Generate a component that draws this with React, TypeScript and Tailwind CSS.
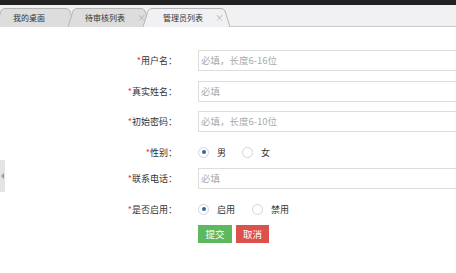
import React from "react";

const font = { fontFamily: '"Noto Sans CJK SC", "Liberation Sans", sans-serif' };

function Tab({ label, width, active, close, pl }: { label: string; width: number; active?: boolean; close?: boolean; pl: string }) {
  const h = 19;
  const s = 7;
  const d = `M0,${h} L${s - 2},3 Q${s - 1},0.5 ${s + 2},0.5 L${width - s - 2},0.5 Q${width - s + 1},0.5 ${width - s + 2},3 L${width},${h}`;
  return (
    <div className="relative h-[19px] -mr-[7px] flex items-center shrink-0" style={{ width }}>
      <svg className="absolute inset-0" width={width} height={h} viewBox={`0 0 ${width} ${h}`}>
        <path d={d + " Z"} fill={active ? "#f1f1f3" : "#dddddd"} stroke="none" />
        <path d={d} fill="none" stroke="#b5b5b5" strokeWidth="1" />
      </svg>
      <div className={`relative flex w-full items-center ${pl} text-[8px] text-[#333] leading-none whitespace-nowrap`}>
        <span>{label}</span>
        {close && <span className="ml-[12px] text-[9px] text-[#b0b0b0]">×</span>}
      </div>
    </div>
  );
}

function Label({ text }: { text: string }) {
  return (
    <div className="w-[177px] shrink-0 text-right text-[9px] text-[#333] leading-none whitespace-nowrap">
      <span className="text-[#e33]">*</span>
      {text}：
    </div>
  );
}

function InputRow({ label, placeholder, mt }: { label: string; placeholder: string; mt: string }) {
  return (
    <div className={`flex items-center ${mt}`}>
      <Label text={label} />
      <div className="ml-[21px] h-[21px] w-[300px] shrink-0 border border-[#ddd] flex items-center pl-[2px] text-[9.5px] text-[#aaa] whitespace-nowrap">
        {placeholder}
      </div>
    </div>
  );
}

function Radio({ checked, label, gap }: { checked?: boolean; label: string; gap: string }) {
  return (
    <div className={`flex items-center ${gap}`}>
      <div className="w-[11px] h-[11px] rounded-full border border-[#d4d4d4] bg-white flex items-center justify-center">
        {checked && <div className="w-[4px] h-[4px] rounded-full bg-[#2a6aa6]" />}
      </div>
      <span className="ml-[8px] text-[9px] text-[#333] leading-none">{label}</span>
    </div>
  );
}

export default function App() {
  return (
    <div className="w-[456px] h-[273px] bg-white overflow-hidden relative" style={font}>
      <div className="h-[5px] bg-[#222]" />
      <div className="h-[22px] bg-[#f1f1f3] border-b border-[#c8c8c8] flex items-end">
        <div className="flex items-end -ml-[4px] mb-[-1px]">
          <Tab label="我的桌面" width={79} pl="pl-[17px]" />
          <Tab label="待审核列表" width={82} pl="pl-[17px]" close />
          <Tab label="管理员列表" width={87} pl="pl-[20px]" active close />
        </div>
      </div>

      <div className="absolute left-0 top-[160px] w-[5px] h-[32px] bg-[#e4e4e4] flex items-center justify-center">
        <div className="w-0 h-0 border-y-[3px] border-y-transparent border-r-[3px] border-r-[#999]" />
      </div>

      <div className="pt-[23px]">
        <InputRow label="用户名" placeholder="必填，长度6-16位" mt="" />
        <InputRow label="真实姓名" placeholder="必填" mt="mt-[10px]" />
        <InputRow label="初始密码" placeholder="必填，长度6-10位" mt="mt-[9px]" />
        <div className="flex items-center mt-[10px] h-[20px]">
          <Label text="性别" />
          <div className="ml-[21px] flex items-center">
            <Radio checked label="男" gap="" />
            <Radio label="女" gap="ml-[16px]" />
          </div>
        </div>
        <InputRow label="联系电话" placeholder="必填" mt="mt-[6px]" />
        <div className="flex items-center mt-[10px] h-[20px]">
          <Label text="是否启用" />
          <div className="ml-[21px] flex items-center">
            <Radio checked label="启用" gap="" />
            <Radio label="禁用" gap="ml-[17px]" />
          </div>
        </div>
        <div className="flex mt-[6px] ml-[198px] gap-[4px]">
          <div className="w-[34px] h-[18px] bg-[#5eb95e] text-white text-[9.5px] flex items-center justify-center">提交</div>
          <div className="w-[33px] h-[18px] bg-[#dd514c] text-white text-[9.5px] flex items-center justify-center">取消</div>
        </div>
      </div>
    </div>
  );
}
